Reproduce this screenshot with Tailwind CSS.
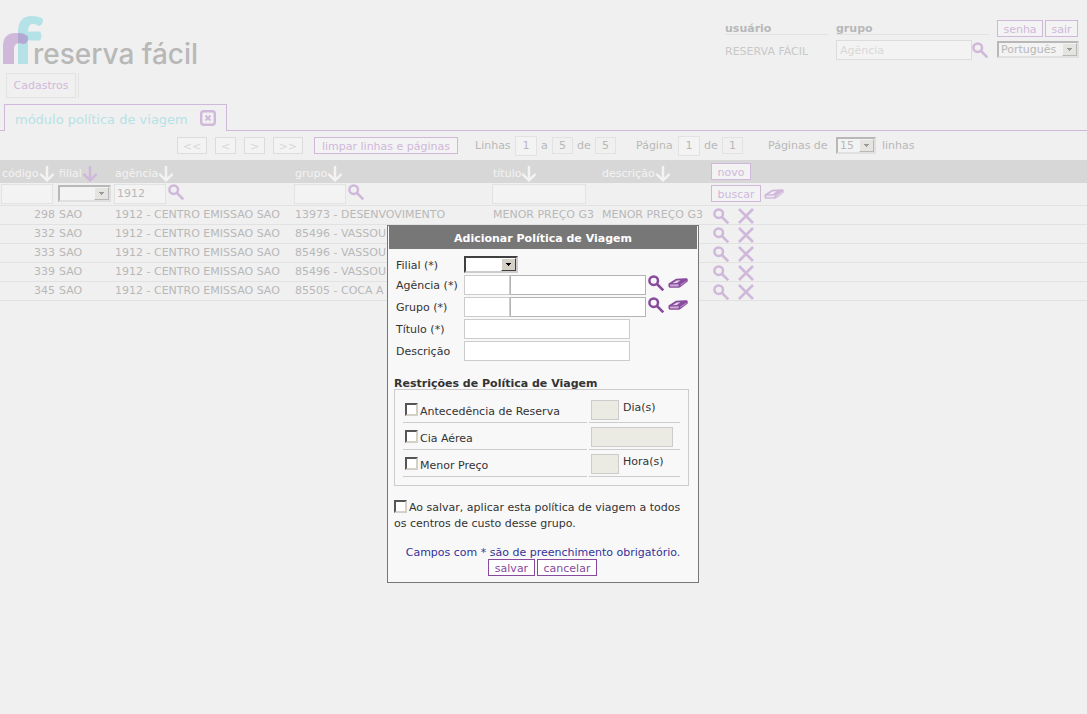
<!DOCTYPE html>
<html lang="pt-BR">
<head>
<meta charset="utf-8">
<title>Reserva Fácil - Política de Viagem</title>
<script src="https://cdn.jsdelivr.net/npm/@tailwindcss/browser@4"></script>
</head>
<body class="min-h-screen bg-[#f0f0f0] font-['DejaVu_Sans',sans-serif] text-[11px] leading-4 text-[#b8b8b8]">
<svg class="hidden" aria-hidden="true">
  <symbol id="search" viewBox="0 0 16 16"><circle cx="5.700" cy="5.700" r="4.300" fill="none" stroke="currentColor" stroke-width="2.500"/><path d="M9 9L15.300 15.300" stroke="currentColor" stroke-width="2.600" fill="none"/></symbol>
  <symbol id="eraser" viewBox="0 0 20 10"><path d="M.5 5.500L8 .8Q13 .2 19 .3Q20 .5 19.700 3.500L12.500 9L11 9.700H2Q0 9.700 .5 5.500Z" fill="currentColor"/><path d="M2 6.500L10.800 6.200L10.400 8.400L2.200 8.600Z" fill="#fff" fill-opacity=".55"/><path d="M4.500 5.200L8.500 2.500L12.500 2.300L9 5Z" fill="#fff" fill-opacity=".75"/><path d="M12.300 6.500L18.500 2.500V3.500L12.500 7.800Z" fill="#fff" fill-opacity=".4"/></symbol>
  <symbol id="down" viewBox="0 0 16 16"><path d="M8 0V14M1.300 7.800L8 14.400L14.700 7.800" fill="none" stroke="currentColor" stroke-width="2.400"/></symbol>
  <symbol id="cross" viewBox="0 0 16 16"><path d="M1 1L15 15M15 1L1 15" fill="none" stroke="currentColor" stroke-width="2.600"/></symbol>
  <symbol id="drop" viewBox="0 0 5 3"><path d="M0 0H5V1H4V2H3V3H2V2H1V1H0Z" fill="currentColor"/></symbol>
</svg>

<header class="flex h-[72px] justify-between pr-2">
  <a href="#" aria-label="reserva fácil" class="block pl-[3px] pt-[15px]">
    <svg class="overflow-visible" width="210" height="54" viewBox="0 0 210 54">
      <path d="M15 49V17Q15 1 29 1Q36 1 40 4Q40 10 36 11Q32 8.500 29 9Q25 10 25 16.500H37Q40 20 37 25.500H25V49Z" fill="#b5e2e6"/>
      <path d="M0 49V31Q0 18 13 18Q21 18 25 22Q25 28 21 29Q11 26 11 34V49Z" fill="#d0b8da"/>
      <path d="M15 28V18Q22 18 25 22Q25 28 21 29Q17 28 15 28Z" fill="#b2a8d4"/>
      <text x="30" y="49" font-family="Inter, sans-serif" font-weight="500" font-size="28" fill="#b8b8b8">reserva fácil</text>
    </svg>
  </a>
  <div class="flex pt-5">
    <div class="mr-2 w-[103px]">
      <div class="h-[15px] border-b border-[#e2e2e2] leading-[17px] font-bold">usuário</div>
      <div class="pt-2 leading-[18px] whitespace-nowrap text-[#c8c8c8]">RESERVA FÁCIL</div>
    </div>
    <div class="mr-2 w-[153px]">
      <label for="grp" class="block h-[15px] border-b border-[#e2e2e2] leading-[17px] font-bold">grupo</label>
      <div class="flex pt-[5px]">
        <input id="grp" placeholder="Agência" class="h-5 w-[136px] border border-[#dcdcdc] bg-[#f3f3f3] px-[3px] placeholder:text-[#d8d8d8]">
        <button aria-label="Buscar grupo" class="mt-[2px] size-4 text-[#d0b8da]"><svg class="size-4"><use href="#search"/></svg></button>
      </div>
    </div>
    <div class="w-[82px]">
      <div class="flex gap-[2px]">
        <button class="h-[17px] w-[46px] border border-[#d0b8da] bg-[#f3f3f3] leading-[17px] text-[#d0b8da]">senha</button>
        <button class="h-[17px] w-[33px] border border-[#d0b8da] bg-[#f3f3f3] leading-[17px] text-[#d0b8da]">sair</button>
      </div>
      <div class="relative mt-1 h-[17px] border-2 border-[#e0e0e0] border-t-[#b8b8b8] border-l-[#b8b8b8] bg-[#f3f3f3]">
        <select aria-label="Idioma" class="block h-[13px] w-full appearance-none pl-[2px] leading-[13px]"><option>Português</option></select>
        <span class="pointer-events-none absolute inset-y-0 right-0 flex w-[15px] items-center justify-center border border-[#f3f3f3] border-r-[#b8b8b8] border-b-[#b8b8b8] bg-[#e5e4e0]"><svg class="h-[3px] w-[5px] text-[#999]"><use href="#drop"/></svg></span>
      </div>
    </div>
  </div>
</header>

<nav class="flex h-8 gap-[2px] pl-[6px] pt-px">
  <a href="#" class="flex h-[25px] w-[70px] items-center justify-center border border-[#e2e2e2] pt-px text-[#d0b8da]">Cadastros</a>
  <span class="h-[25px] w-px bg-[#e2e2e2]"></span>
</nav>

<div class="flex h-[27px]">
  <span class="w-1 border-b border-[#d0b8da]"></span>
  <div class="flex w-[223px] items-center justify-between border border-b-0 border-[#d0b8da] px-[10px] text-[#b5e2e6]">
    <span class="pt-1 text-[13px] whitespace-nowrap">módulo política de viagem</span>
    <button aria-label="Fechar módulo" class="size-4 text-[#d0b8da]"><svg class="size-4" viewBox="0 0 16 16"><rect x="1.200" y="1.200" width="13.600" height="13.600" rx="2.500" fill="none" stroke="currentColor" stroke-width="2.400"/><path d="M5.500 5.500L10.500 10.500M10.500 5.500L5.500 10.500" stroke="currentColor" stroke-width="1.800"/></svg></button>
  </div>
  <span class="flex-1 border-b border-[#d0b8da]"></span>
</div>

<div class="flex h-[29px] items-center pl-[177px] whitespace-nowrap">
  <div class="flex gap-2 text-[#d8d8d8]">
    <button class="h-[17px] w-[30px] border border-[#dcdcdc] bg-[#f3f3f3] leading-[17px]">&lt;&lt;</button>
    <button class="h-[17px] w-[21px] border border-[#dcdcdc] bg-[#f3f3f3] leading-[17px]">&lt;</button>
    <button class="h-[17px] w-[21px] border border-[#dcdcdc] bg-[#f3f3f3] leading-[17px]">&gt;</button>
    <button class="h-[17px] w-[30px] border border-[#dcdcdc] bg-[#f3f3f3] leading-[17px]">&gt;&gt;</button>
  </div>
  <button class="ml-[11px] h-[17px] w-[144px] border border-[#d0b8da] bg-[#f3f3f3] leading-[17px] text-[#d0b8da]">limpar linhas e páginas</button>
  <label for="l1" class="ml-[17px] w-10">Linhas</label>
  <input id="l1" value="1" class="h-5 w-[22px] border border-[#e2e2e2] bg-[#f3f3f3] text-center">
  <span class="w-[15px] pl-1">a</span>
  <span class="h-[17px] w-[21px] border border-[#e2e2e2] text-center leading-[15px]">5</span>
  <span class="w-[22px] pl-1">de</span>
  <span class="h-[17px] w-[21px] border border-[#e2e2e2] text-center leading-[15px]">5</span>
  <label for="p1" class="ml-5 w-[42px]">Página</label>
  <input id="p1" value="1" class="h-5 w-[22px] border border-[#e2e2e2] bg-[#f3f3f3] text-center">
  <span class="w-[22px] pl-1">de</span>
  <span class="h-[17px] w-[21px] border border-[#e2e2e2] text-center leading-[15px]">1</span>
  <label for="pp" class="ml-[25px] w-[68px] pt-px">Páginas de</label>
  <div class="relative h-[17px] w-10 border-2 border-[#e0e0e0] border-t-[#b8b8b8] border-l-[#b8b8b8] bg-[#f3f3f3]">
    <select id="pp" class="block h-[13px] w-full appearance-none pl-[2px] leading-[13px]"><option>15</option></select>
    <span class="pointer-events-none absolute inset-y-0 right-0 flex w-[15px] items-center justify-center border border-[#f3f3f3] border-r-[#b8b8b8] border-b-[#b8b8b8] bg-[#e5e4e0]"><svg class="h-[3px] w-[5px] text-[#999]"><use href="#drop"/></svg></span>
  </div>
  <span class="ml-[6px] pt-px">linhas</span>
</div>

<table class="w-full table-fixed border-collapse text-left whitespace-nowrap">
  <colgroup><col class="w-[57px]"><col class="w-[57px]"><col class="w-[180px]"><col class="w-[198px]"><col class="w-[110px]"><col class="w-[109px]"><col></colgroup>
  <thead>
    <tr class="h-[23px] bg-[#d7d7d7] text-[#f3f3f3]">
      <th class="p-0 pl-[2px] font-normal"><span class="flex items-center pt-1">código<svg class="size-4 shrink-0"><use href="#down"/></svg></span></th>
      <th class="p-0 pl-[2px] font-normal"><span class="flex items-center pt-1">filial<svg class="size-4 shrink-0 text-[#d0b8da]"><use href="#down"/></svg></span></th>
      <th class="p-0 pl-px font-normal"><span class="flex items-center pt-1">agência<svg class="size-4 shrink-0"><use href="#down"/></svg></span></th>
      <th class="p-0 pl-px font-normal"><span class="flex items-center pt-1">grupo<svg class="size-4 shrink-0"><use href="#down"/></svg></span></th>
      <th class="p-0 pl-px font-normal"><span class="flex items-center pt-1">título<svg class="size-4 shrink-0"><use href="#down"/></svg></span></th>
      <th class="p-0 font-normal"><span class="flex items-center pt-1">descrição<svg class="size-4 shrink-0"><use href="#down"/></svg></span></th>
      <th class="p-0 font-normal"><button class="block h-[17px] w-10 border border-[#d0b8da] bg-[#f3f3f3] leading-[17px] text-[#d0b8da]">novo</button></th>
    </tr>
  </thead>
  <tbody>
    <tr class="h-[22px] border-b border-[#e2e2e2]">
      <td class="p-0 pl-px"><input aria-label="código" class="block h-5 w-[52px] border border-[#e2e2e2] bg-[#f3f3f3]"></td>
      <td class="p-0 pl-px">
        <div class="relative h-[17px] w-[53px] border-2 border-[#e0e0e0] border-t-[#b8b8b8] border-l-[#b8b8b8] bg-[#f3f3f3]">
          <select aria-label="filial" class="block h-[13px] w-full appearance-none"><option></option></select>
          <span class="pointer-events-none absolute inset-y-0 right-0 flex w-[15px] items-center justify-center border border-[#f3f3f3] border-r-[#b8b8b8] border-b-[#b8b8b8] bg-[#e5e4e0]"><svg class="h-[3px] w-[5px] text-[#999]"><use href="#drop"/></svg></span>
        </div>
      </td>
      <td class="p-0"><div class="flex gap-[2px]"><input aria-label="agência" value="1912" class="h-5 w-[52px] border border-[#e2e2e2] bg-[#f3f3f3] px-[2px]"><button aria-label="Buscar agência" class="size-4 text-[#d0b8da]"><svg class="size-4"><use href="#search"/></svg></button></div></td>
      <td class="p-0"><div class="flex gap-[2px]"><input aria-label="grupo" class="h-5 w-[52px] border border-[#e2e2e2] bg-[#f3f3f3]"><button aria-label="Buscar grupo" class="size-4 text-[#d0b8da]"><svg class="size-4"><use href="#search"/></svg></button></div></td>
      <td class="p-0"><input aria-label="título" class="block h-5 w-[94px] border border-[#e2e2e2] bg-[#f3f3f3]"></td>
      <td class="p-0"></td>
      <td class="p-0"><div class="flex items-center gap-[3px] text-[#d0b8da]"><button class="h-[17px] w-[50px] border border-[#d0b8da] bg-[#f3f3f3] leading-[17px]">buscar</button><button aria-label="Limpar filtros"><svg class="h-[10px] w-5"><use href="#eraser"/></svg></button></div></td>
    </tr>
    <tr class="h-[19px] border-b border-[#e2e2e2]">
      <td class="p-0 pt-px pr-[2px] text-right">298</td><td class="p-0 pt-px pl-[2px]">SAO</td><td class="overflow-hidden p-0 pt-px pl-px">1912 - CENTRO EMISSAO SAO</td><td class="overflow-hidden p-0 pt-px pl-px">13973 - DESENVOVIMENTO</td><td class="overflow-hidden p-0 pt-px pl-px">MENOR PREÇO G3</td><td class="overflow-hidden p-0 pt-px">MENOR PREÇO G3</td>
      <td class="p-0 pl-[2px]"><div class="flex gap-[9px] pt-[2px] text-[#d0b8da]"><button aria-label="Ver 298"><svg class="size-4"><use href="#search"/></svg></button><button aria-label="Excluir 298"><svg class="size-4"><use href="#cross"/></svg></button></div></td>
    </tr>
    <tr class="h-[19px] border-b border-[#e2e2e2]">
      <td class="p-0 pt-px pr-[2px] text-right">332</td><td class="p-0 pt-px pl-[2px]">SAO</td><td class="overflow-hidden p-0 pt-px pl-px">1912 - CENTRO EMISSAO SAO</td><td class="overflow-hidden p-0 pt-px pl-px">85496 - VASSOU</td><td class="p-0"></td><td class="p-0"></td>
      <td class="p-0 pl-[2px]"><div class="flex gap-[9px] pt-[2px] text-[#d0b8da]"><button aria-label="Ver 332"><svg class="size-4"><use href="#search"/></svg></button><button aria-label="Excluir 332"><svg class="size-4"><use href="#cross"/></svg></button></div></td>
    </tr>
    <tr class="h-[19px] border-b border-[#e2e2e2]">
      <td class="p-0 pt-px pr-[2px] text-right">333</td><td class="p-0 pt-px pl-[2px]">SAO</td><td class="overflow-hidden p-0 pt-px pl-px">1912 - CENTRO EMISSAO SAO</td><td class="overflow-hidden p-0 pt-px pl-px">85496 - VASSOU</td><td class="p-0"></td><td class="p-0"></td>
      <td class="p-0 pl-[2px]"><div class="flex gap-[9px] pt-[2px] text-[#d0b8da]"><button aria-label="Ver 333"><svg class="size-4"><use href="#search"/></svg></button><button aria-label="Excluir 333"><svg class="size-4"><use href="#cross"/></svg></button></div></td>
    </tr>
    <tr class="h-[19px] border-b border-[#e2e2e2]">
      <td class="p-0 pt-px pr-[2px] text-right">339</td><td class="p-0 pt-px pl-[2px]">SAO</td><td class="overflow-hidden p-0 pt-px pl-px">1912 - CENTRO EMISSAO SAO</td><td class="overflow-hidden p-0 pt-px pl-px">85496 - VASSOU</td><td class="p-0"></td><td class="p-0"></td>
      <td class="p-0 pl-[2px]"><div class="flex gap-[9px] pt-[2px] text-[#d0b8da]"><button aria-label="Ver 339"><svg class="size-4"><use href="#search"/></svg></button><button aria-label="Excluir 339"><svg class="size-4"><use href="#cross"/></svg></button></div></td>
    </tr>
    <tr class="h-[19px] border-b border-[#e2e2e2]">
      <td class="p-0 pt-px pr-[2px] text-right">345</td><td class="p-0 pt-px pl-[2px]">SAO</td><td class="overflow-hidden p-0 pt-px pl-px">1912 - CENTRO EMISSAO SAO</td><td class="overflow-hidden p-0 pt-px pl-px">85505 - COCA A</td><td class="p-0"></td><td class="p-0"></td>
      <td class="p-0 pl-[2px]"><div class="flex gap-[9px] pt-[2px] text-[#d0b8da]"><button aria-label="Ver 345"><svg class="size-4"><use href="#search"/></svg></button><button aria-label="Excluir 345"><svg class="size-4"><use href="#cross"/></svg></button></div></td>
    </tr>
  </tbody>
</table>

<div class="absolute inset-x-0 top-[225px] flex justify-center pr-px">
  <form role="dialog" aria-labelledby="dlg" class="w-[312px] border border-[#777] bg-[#f8f8f8] pb-[6px] text-[#333]">
    <h2 id="dlg" class="mx-px h-[23px] bg-[#777] text-center leading-[25px] font-bold text-white">Adicionar Política de Viagem</h2>
    <div class="grid grid-cols-[68px_1fr] gap-y-[2px] pl-2 pt-[7px] whitespace-nowrap">
      <label for="filial" class="h-[17px] leading-5">Filial (*)</label>
      <div class="relative h-[17px] w-[54px] border-2 border-[#ccc] border-t-[#404040] border-l-[#404040] bg-white">
        <select id="filial" class="block h-[13px] w-full appearance-none"><option></option></select>
        <span class="pointer-events-none absolute inset-y-0 right-0 flex w-[15px] items-center justify-center border border-white border-r-[#404040] border-b-[#404040] bg-[#d4d0c8]"><svg class="h-[3px] w-[5px] text-black"><use href="#drop"/></svg></span>
      </div>
      <label for="ag" class="pt-[3px]">Agência (*)</label>
      <div class="flex text-[#884a9c]"><input id="ag" class="h-5 w-[46px] border border-[#ccc] bg-white"><input aria-label="Nome da agência" class="h-5 w-[136px] border border-[#b4b4b4] bg-white"><button type="button" aria-label="Buscar agência" class="ml-[2px] size-4"><svg class="size-4"><use href="#search"/></svg></button><button type="button" aria-label="Limpar agência" class="ml-1 mt-[3px] h-[10px]"><svg class="h-[10px] w-5"><use href="#eraser"/></svg></button></div>
      <label for="gr" class="pt-[3px]">Grupo (*)</label>
      <div class="flex text-[#884a9c]"><input id="gr" class="h-5 w-[46px] border border-[#ccc] bg-white"><input aria-label="Nome do grupo" class="h-5 w-[136px] border border-[#b4b4b4] bg-white"><button type="button" aria-label="Buscar grupo" class="ml-[2px] size-4"><svg class="size-4"><use href="#search"/></svg></button><button type="button" aria-label="Limpar grupo" class="ml-1 mt-[3px] h-[10px]"><svg class="h-[10px] w-5"><use href="#eraser"/></svg></button></div>
      <label for="ti" class="pt-[3px]">Título (*)</label>
      <input id="ti" class="h-5 w-[166px] border border-[#ccc] bg-white">
      <label for="de" class="pt-[3px]">Descrição</label>
      <input id="de" class="h-5 w-[166px] border border-[#ccc] bg-white">
    </div>

    <h3 class="mt-[14px] h-[14px] pl-[6px] leading-[17px] font-bold">Restrições de Política de Viagem</h3>
    <div class="mr-[9px] ml-[6px] grid grid-cols-[184px_1fr] gap-x-[2px] border border-[#ccc] px-2 pt-[6px] pb-[8px]">
      <label class="flex h-[27px] items-center gap-[2px] border-b border-[#ccc] pl-[2px] whitespace-nowrap"><input type="checkbox" class="size-[13px] appearance-none border-2 border-[#d4d0c8] border-t-[#555] border-l-[#555] bg-white"><span class="pt-[5px]">Antecedência de Reserva</span></label>
      <div class="flex h-[27px] gap-1 border-b border-[#ccc] pt-1 pl-[2px]"><input id="dias" disabled class="h-5 w-7 border border-[#ccc] bg-[#ebebe4]"><label for="dias">Dia(s)</label></div>
      <label class="flex h-[27px] items-center gap-[2px] border-b border-[#ccc] pl-[2px]"><input type="checkbox" class="size-[13px] appearance-none border-2 border-[#d4d0c8] border-t-[#555] border-l-[#555] bg-white"><span class="pt-[5px]">Cia Aérea</span></label>
      <div class="h-[27px] border-b border-[#ccc] pt-1 pl-[2px]"><input aria-label="Cia Aérea" disabled class="block h-5 w-[82px] border border-[#ccc] bg-[#ebebe4]"></div>
      <label class="flex h-[27px] items-center gap-[2px] border-b border-[#ccc] pl-[2px]"><input type="checkbox" class="size-[13px] appearance-none border-2 border-[#d4d0c8] border-t-[#555] border-l-[#555] bg-white"><span class="pt-[5px]">Menor Preço</span></label>
      <div class="flex h-[27px] gap-1 border-b border-[#ccc] pt-1 pl-[2px]"><input id="horas" disabled class="h-5 w-7 border border-[#ccc] bg-[#ebebe4]"><label for="horas">Hora(s)</label></div>
    </div>

    <label class="mt-[14px] block pl-[6px] whitespace-nowrap"><input type="checkbox" class="mr-[2px] inline-block size-[13px] appearance-none border-2 border-[#d4d0c8] border-t-[#555] border-l-[#555] bg-white align-[-2px]">Ao salvar, aplicar esta política de viagem a todos<br>os centros de custo desse grupo.</label>
    <p class="mt-[13px] h-[14px] text-center whitespace-nowrap text-[#333399]">Campos com * são de preenchimento obrigatório.</p>
    <div class="flex justify-center gap-[2px] pr-px text-[#884a9c]">
      <button type="button" class="h-[17px] w-[47px] border border-[#884a9c] bg-white leading-[17px]">salvar</button>
      <button type="button" class="h-[17px] w-[60px] border border-[#884a9c] bg-white leading-[17px]">cancelar</button>
    </div>
  </form>
</div>
</body>
</html>
